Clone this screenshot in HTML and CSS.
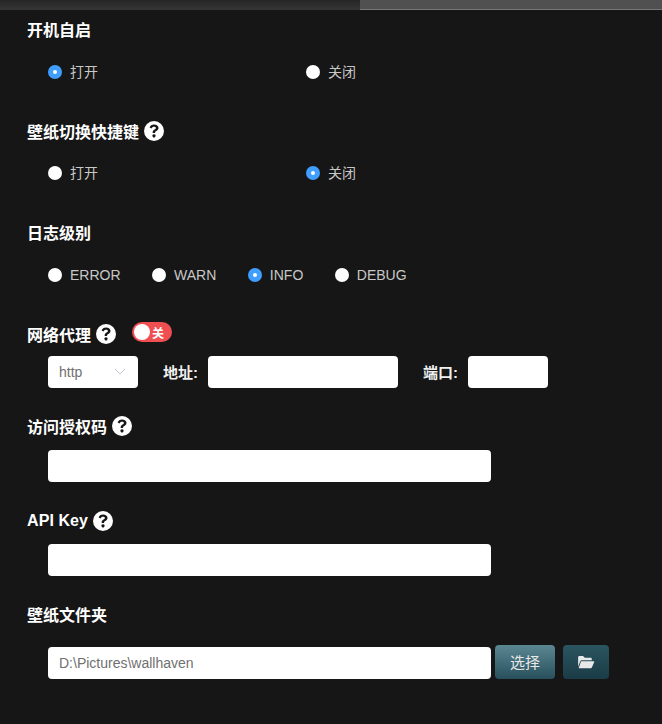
FILE: index.html
```html
<!DOCTYPE html>
<html lang="zh">
<head>
<meta charset="utf-8">
<title>设置</title>
<link rel="stylesheet" href="styles.css">
</head>
<body>
<div class="topbar"><div class="tab-left"></div><div class="tab-right"></div></div>
<main class="form">
  <section class="item item-radio">
    <div class="label">开机自启</div>
    <div class="radios wide">
      <label class="radio on"><i></i>打开</label>
      <label class="radio"><i></i>关闭</label>
    </div>
  </section>
  <section class="item item-radio">
    <div class="label">壁纸切换快捷键<svg class="help" viewBox="0 0 20 20"><use href="#q"/></svg></div>
    <div class="radios wide">
      <label class="radio"><i></i>打开</label>
      <label class="radio on"><i></i>关闭</label>
    </div>
  </section>
  <section class="item item-radio">
    <div class="label">日志级别</div>
    <div class="radios levels">
      <label class="radio"><i></i>ERROR</label>
      <label class="radio"><i></i>WARN</label>
      <label class="radio on"><i></i>INFO</label>
      <label class="radio"><i></i>DEBUG</label>
    </div>
  </section>
  <section class="item item-proxy">
    <div class="label">网络代理<svg class="help" viewBox="0 0 20 20"><use href="#q"/></svg><span class="switch"><b></b><em>关</em></span></div>
    <div class="proxy">
      <div class="select">http<svg class="chev" viewBox="0 0 12 7"><path d="M1 1l5 5 5-5"/></svg></div>
      <span class="fld">地址:</span>
      <div class="input addr"></div>
      <span class="fld">端口:</span>
      <div class="input port"></div>
    </div>
  </section>
  <section class="item item-input">
    <div class="label">访问授权码<svg class="help" viewBox="0 0 20 20"><use href="#q"/></svg></div>
    <div class="input full"></div>
  </section>
  <section class="item item-input">
    <div class="label label-latin">API Key<svg class="help" viewBox="0 0 20 20"><use href="#q"/></svg></div>
    <div class="input full"></div>
  </section>
  <section class="item item-folder">
    <div class="label">壁纸文件夹</div>
    <div class="folder">
      <div class="input full path">D:\Pictures\wallhaven</div>
      <button class="btn pick">选择</button>
      <button class="btn open"><svg viewBox="0 0 20 16"><path d="M1 13.5V2.5C1 1.7 1.6 1 2.4 1h4.2l2 2h6.6c.8 0 1.4.6 1.4 1.4V6H5.4c-.9 0-1.7.5-2.1 1.3z"/><path d="M4.4 7.2h14.2c.6 0 1 .6.7 1.2l-2.5 5.6c-.2.6-.8 1-1.4 1H1.6z"/></svg></button>
    </div>
  </section>
</main>
<svg class="defs" width="0" height="0"><defs><symbol id="q" viewBox="0 0 20 20"><path fill="#fff" fill-rule="evenodd" d="M10 0a10 10 0 1 1 0 20 10 10 0 0 1 0-20zM9 13.6a1.6 1.6 0 1 0 2 0 1.6 1.6 0 0 0-2 0zM10.1 3.6c-2.3 0-3.8 1-4.5 3l2 .8c.4-1.1 1.1-1.7 2.4-1.7 1.1 0 1.9.5 1.9 1.3 0 .7-.5 1.1-1.4 1.6-1.1.7-1.8 1.4-1.8 2.8v.6h2.4v-.4c0-.7.4-1 1.2-1.5 1.2-.7 2.2-1.5 2.2-3 0-2.1-1.9-3.5-4.4-3.5z"/></symbol></defs></svg>
</body>
</html>
```
FILE: styles.css
```css
* { box-sizing: border-box; }
html, body { margin: 0; height: 724px; overflow: hidden; }
body {
  background: #161616;
  color: #fff;
  font-family: "Liberation Sans", "Noto Sans CJK SC", sans-serif;
}
.topbar { display: flex; height: 10px; }
.tab-left { width: 360px; background: linear-gradient(#262626, #363636); }
.tab-right { flex: 1; background: #505050; border-bottom: 1px solid #777; }
.form { display: flex; flex-direction: column; padding-left: 27px; }
.item { display: flex; flex-direction: column; }
.item-radio { height: 101.5px; }
.item-proxy { height: 92px; }
.item-input { height: 94px; }
.label {
  display: flex;
  align-items: center;
  height: 24px;
  margin-top: 7px;
  font-size: 16px;
  font-weight: 700;
  color: #fff;
}
.label-latin { letter-spacing: 0.08px; padding-top: 2px; }
.help { width: 20px; height: 20px; margin-left: 5px; flex: none; }
.radios { display: flex; margin: 20.5px 0 0 21px; }
.radios.wide { margin-top: 19.5px; }
.radio {
  display: flex;
  align-items: center;
  height: 20px;
  font-size: 14px;
  color: #c8c8c8;
}
.radio i {
  width: 14px;
  height: 14px;
  margin-right: 8px;
  border-radius: 50%;
  background: #fff;
  display: flex;
  align-items: center;
  justify-content: center;
}
.wide .radio i { margin-top: 2px; }
.radio.on i { background: #409eff; }
.radio.on i::after {
  content: "";
  width: 4px;
  height: 4px;
  border-radius: 50%;
  background: #fff;
}
.wide .radio { width: 258px; }
.levels { gap: 31.5px; }
.switch {
  position: relative;
  width: 40px;
  height: 20px;
  margin: -3px 0 0 16px;
  border-radius: 10px;
  background: #f04f52;
  display: flex;
  align-items: center;
  justify-content: flex-end;
  padding-right: 8px;
}
.switch b {
  position: absolute;
  left: 2px;
  top: 2px;
  width: 16px;
  height: 16px;
  border-radius: 50%;
  background: #fff;
}
.switch em { font-style: normal; font-size: 12px; font-weight: 700; }
.proxy { display: flex; align-items: center; margin: 10px 0 0 21px; }
.select {
  width: 90px;
  height: 32px;
  display: flex;
  align-items: center;
  justify-content: space-between;
  padding: 0 12px 0 11px;
  background: #fff;
  border-radius: 4px;
  color: #707070;
  font-size: 14px;
}
.chev { width: 12px; height: 7px; fill: none; stroke: #c0c4cc; stroke-width: 1; }
.fld { margin: 0 10px 0 25px; font-size: 15px; font-weight: 700; color: #f0f0f0; }
.input { height: 32px; background: #fff; border-radius: 4px; }
.addr { width: 190px; }
.port { width: 80px; }
.full { width: 443px; margin-left: 21px; }
.item-input .input { margin-top: 12px; }
.folder { display: flex; align-items: flex-start; margin: 19px 0 0 21px; }
.path {
  margin-left: 0;
  margin-top: 2px;
  display: flex;
  align-items: center;
  padding-left: 11px;
  font-size: 14px;
  color: #707070;
}
.btn {
  height: 34px;
  border: 0;
  border-radius: 4px;
  color: #e8e8e8;
  padding: 0;
  display: flex;
  align-items: center;
  justify-content: center;
  font-family: inherit;
}
.pick {
  width: 60px;
  margin-left: 4px;
  font-size: 15px;
  background: linear-gradient(#5b8793, #28505c);
}
.open {
  width: 46px;
  margin-left: 8px;
  background: linear-gradient(#2a5560, #1b3c46);
}
.open svg { width: 18px; height: 14px; fill: #e8e8e8; }
.defs { position: absolute; }
```
